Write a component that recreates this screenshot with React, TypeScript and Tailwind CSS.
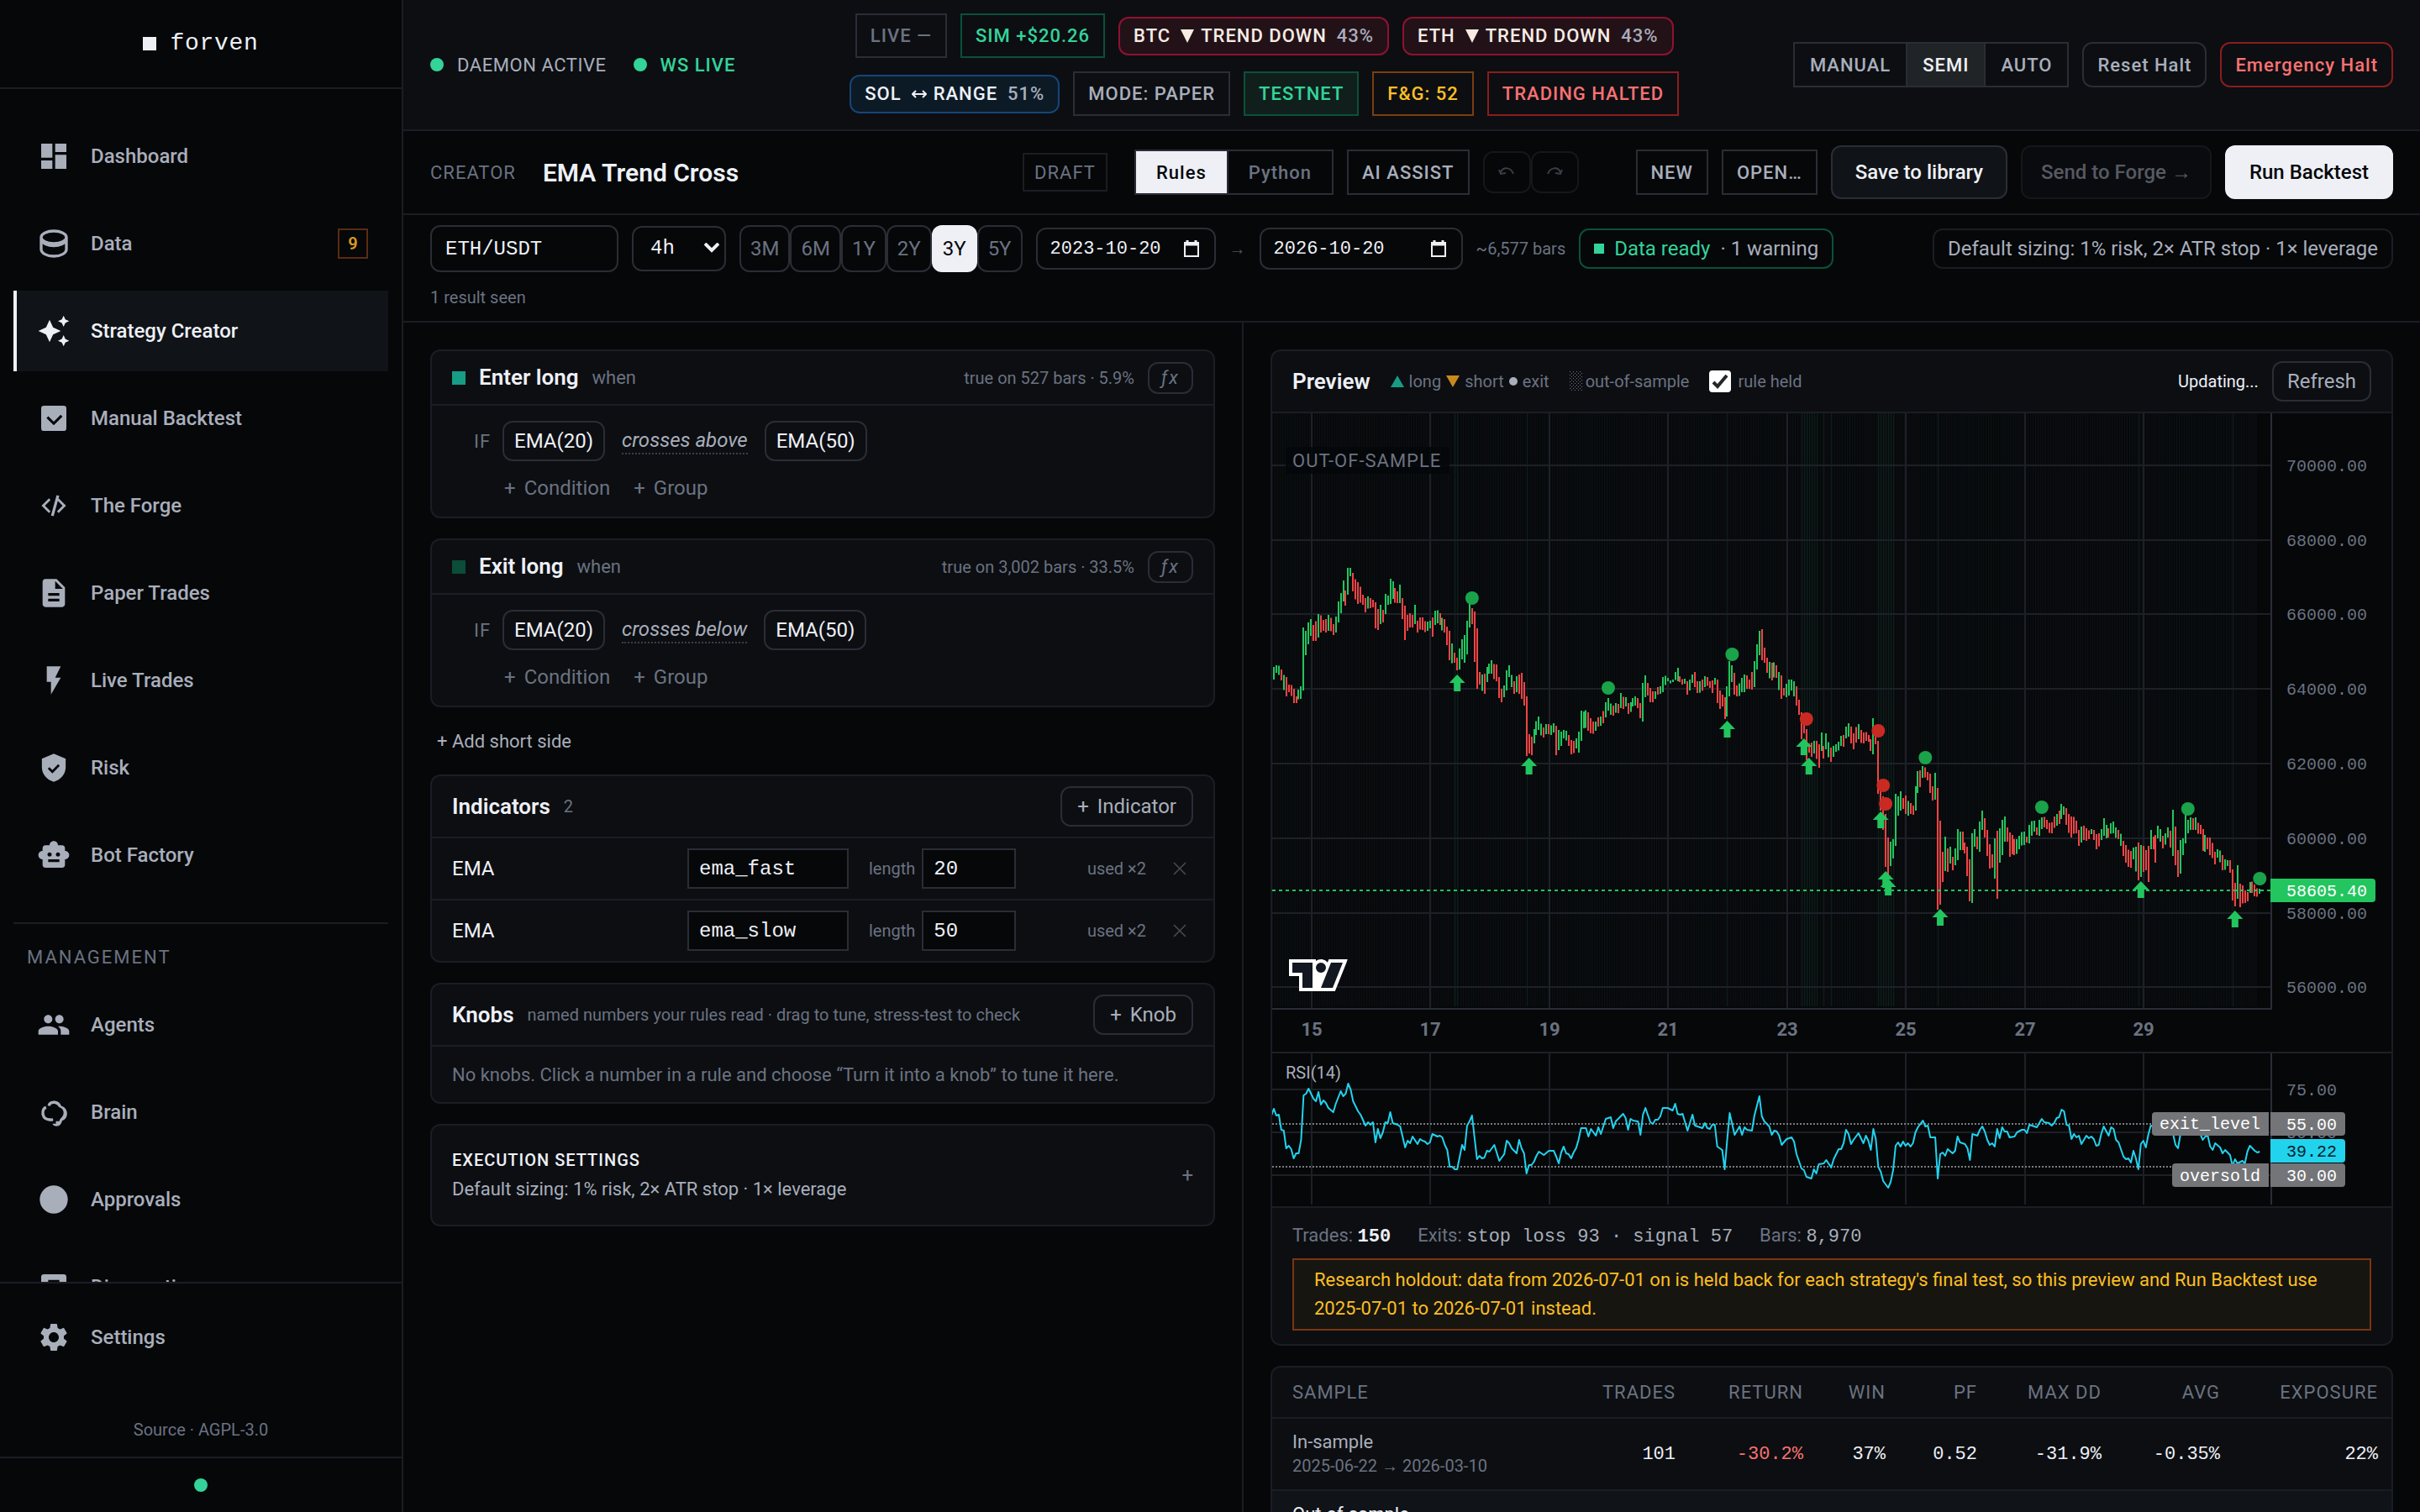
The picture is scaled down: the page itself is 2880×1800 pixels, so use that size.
import type { ReactNode } from 'react';
import { MdAutoAwesome, MdDashboard, MdDescription, MdFlashOn, MdPeople, MdSettings, MdSmartToy } from 'react-icons/md';

type Anchor = [bar: number, high: number, low: number];
type Point = [bar: number, y: number];

const SANS = 'font-["Roboto","Liberation_Sans",sans-serif]';
const MONO = 'font-["Liberation_Mono",monospace]';

// price bars: [bar index, high, low], in chart units from the top of the pane
const BARS: Anchor[] = [
  [0, 302, 317], [1, 300, 309], [3, 305, 318], [5, 314, 337], [6, 323, 332], [8, 328, 345], [9, 337, 345], [11, 325, 340],
  [12, 255, 330], [13, 259, 288], [14, 249, 275], [15, 245, 265], [16, 252, 271], [18, 239, 267], [20, 246, 259], [22, 240, 259],
  [24, 251, 264], [25, 242, 261], [26, 224, 249], [27, 214, 238], [28, 199, 224], [29, 211, 229], [30, 184, 216], [31, 184, 194],
  [32, 190, 212], [34, 201, 227], [36, 216, 228], [37, 220, 237], [39, 220, 232], [40, 222, 231], [41, 225, 256], [42, 233, 258],
  [43, 228, 251], [44, 234, 249], [45, 215, 239], [46, 217, 228], [47, 197, 227], [48, 200, 221], [50, 212, 226], [51, 204, 226],
  [52, 220, 245], [53, 229, 270], [54, 240, 259], [56, 240, 255], [57, 228, 251], [58, 247, 261], [60, 243, 258], [62, 248, 259],
  [63, 247, 256], [64, 243, 266], [65, 235, 252], [67, 238, 252], [69, 245, 261], [70, 254, 276], [71, 259, 294], [73, 285, 297],
  [74, 291, 306], [75, 280, 305], [76, 269, 293], [77, 264, 297], [78, 247, 287], [79, 227, 255], [80, 232, 251], [81, 236, 296],
  [82, 256, 328], [83, 308, 323], [85, 310, 334], [87, 298, 310], [88, 294, 310], [90, 299, 319], [91, 314, 339], [92, 328, 344],
  [93, 324, 338], [94, 306, 330], [95, 300, 314], [97, 319, 334], [99, 311, 334], [100, 309, 340], [101, 320, 348], [102, 337, 408],
  [103, 382, 405], [104, 385, 407], [105, 376, 393], [107, 361, 377], [109, 374, 386], [111, 370, 382], [113, 369, 380], [114, 372, 407],
  [115, 377, 401], [117, 377, 387], [119, 383, 396], [120, 389, 406], [122, 387, 399], [123, 379, 404], [124, 354, 390], [125, 355, 375],
  [127, 356, 378], [128, 363, 381], [130, 367, 378], [132, 361, 372], [134, 344, 362], [135, 339, 354], [137, 348, 360], [139, 346, 357],
  [140, 333, 351], [142, 338, 349], [143, 345, 358], [145, 339, 349], [147, 339, 351], [148, 345, 363], [149, 321, 367], [150, 312, 338],
  [151, 321, 336], [152, 327, 344], [154, 331, 340], [156, 325, 334], [157, 314, 332], [159, 315, 319], [161, 317, 320], [163, 303, 319],
  [164, 313, 320], [166, 316, 322], [167, 319, 335], [169, 311, 321], [170, 308, 326], [171, 319, 333], [174, 313, 326], [176, 319, 327],
  [177, 318, 333], [178, 315, 323], [179, 317, 345], [180, 330, 352], [181, 335, 349], [182, 338, 364], [183, 325, 361], [184, 295, 337],
  [185, 300, 320], [186, 309, 335], [187, 324, 337], [189, 315, 332], [190, 311, 332], [192, 317, 328], [194, 295, 326], [195, 275, 305],
  [196, 259, 288], [197, 257, 294], [198, 279, 297], [199, 291, 309], [201, 297, 318], [203, 300, 315], [205, 312, 340], [206, 327, 336],
  [207, 322, 338], [208, 317, 336], [209, 317, 330], [211, 325, 348], [212, 341, 359], [213, 356, 388], [214, 371, 381], [215, 376, 413],
  [216, 393, 404], [217, 392, 409], [218, 390, 405], [220, 394, 422], [221, 380, 402], [222, 396, 411], [223, 381, 400], [225, 398, 415],
  [226, 396, 409], [227, 394, 403], [229, 384, 396], [230, 383, 397], [231, 373, 387], [232, 369, 385], [233, 373, 393], [234, 381, 400],
  [236, 370, 388], [238, 380, 393], [240, 383, 391], [241, 388, 402], [242, 363, 406], [243, 378, 394], [244, 390, 453], [245, 450, 473],
  [246, 456, 496], [247, 477, 540], [248, 505, 551], [249, 510, 539], [250, 507, 530], [251, 453, 515], [252, 456, 479], [253, 450, 473],
  [254, 458, 471], [255, 455, 477], [257, 464, 477], [258, 467, 478], [259, 444, 473], [260, 426, 452], [262, 420, 434], [264, 427, 437],
  [265, 429, 452], [266, 444, 461], [267, 428, 460], [268, 446, 591], [269, 485, 585], [270, 522, 558], [271, 504, 545], [272, 518, 546],
  [273, 516, 536], [274, 528, 544], [275, 518, 538], [276, 495, 532], [277, 498, 520], [278, 498, 520], [279, 511, 524], [280, 516, 551],
  [281, 531, 581], [282, 500, 583], [283, 495, 516], [284, 504, 519], [285, 486, 522], [286, 473, 496], [287, 482, 505], [288, 496, 527],
  [289, 513, 542], [290, 525, 541], [291, 506, 554], [292, 497, 578], [293, 494, 535], [294, 484, 526], [295, 480, 510], [296, 493, 510],
  [297, 499, 528], [298, 502, 525], [299, 507, 526], [301, 503, 519], [303, 498, 514], [304, 504, 511], [305, 490, 512], [307, 485, 498],
  [308, 493, 502], [309, 484, 503], [310, 481, 495], [312, 484, 495], [314, 487, 500], [316, 477, 491], [318, 465, 483], [319, 468, 478],
  [320, 470, 490], [322, 480, 505], [324, 485, 500], [325, 496, 515], [326, 492, 511], [328, 494, 509], [330, 495, 501], [332, 501, 519],
  [334, 495, 508], [335, 482, 503], [337, 494, 505], [339, 486, 500], [341, 496, 507], [343, 509, 527], [344, 514, 535], [346, 521, 541],
  [347, 517, 531], [349, 511, 556], [350, 514, 552], [352, 520, 544], [353, 515, 558], [354, 496, 519], [355, 504, 519], [356, 502, 535],
  [357, 491, 506], [359, 503, 518], [361, 493, 505], [362, 497, 517], [363, 472, 527], [364, 492, 538], [365, 520, 552], [366, 508, 548],
  [367, 506, 526], [368, 478, 512], [369, 484, 500], [371, 482, 496], [372, 481, 496], [374, 490, 501], [375, 495, 521], [377, 505, 519],
  [378, 505, 526], [380, 522, 537], [381, 519, 529], [383, 526, 544], [385, 532, 539], [386, 532, 547], [387, 543, 580], [388, 559, 587],
  [389, 538, 578], [390, 560, 588], [392, 568, 583], [393, 570, 581], [394, 558, 571], [396, 561, 575], [398, 566, 572],
];

const RSI: Point[] = [
  [-1, 74], [0, 66], [1, 74], [2, 73], [3, 91], [4, 92], [5, 113], [6, 110], [7, 114], [8, 125], [9, 119], [10, 119], [11, 103],
  [12, 50], [13, 48], [14, 42], [15, 48], [16, 54], [17, 57], [18, 46], [19, 61], [20, 56], [21, 59], [22, 65], [24, 70], [25, 60],
  [27, 45], [28, 51], [29, 48], [30, 36], [31, 43], [32, 57], [34, 69], [35, 73], [37, 86], [38, 82], [39, 85], [40, 82], [41, 106],
  [42, 90], [43, 101], [44, 94], [45, 82], [46, 83], [47, 70], [48, 83], [50, 85], [51, 87], [53, 112], [54, 104], [55, 107], [56, 99],
  [58, 108], [59, 102], [60, 104], [61, 105], [62, 108], [63, 106], [64, 96], [66, 99], [67, 98], [68, 100], [69, 109], [70, 115],
  [71, 135], [72, 135], [73, 138], [74, 138], [76, 109], [77, 115], [78, 86], [79, 81], [80, 74], [82, 126], [83, 122], [84, 125],
  [85, 124], [86, 116], [87, 117], [89, 109], [91, 128], [93, 120], [94, 104], [95, 107], [96, 113], [98, 119], [99, 103], [100, 113],
  [101, 119], [102, 143], [103, 133], [104, 133], [105, 129], [106, 122], [107, 117], [109, 121], [111, 116], [113, 116], [114, 123],
  [115, 131], [116, 118], [117, 111], [118, 119], [119, 120], [120, 125], [121, 118], [122, 113], [123, 103], [124, 89], [126, 89],
  [127, 99], [128, 90], [130, 98], [131, 88], [132, 96], [134, 78], [136, 76], [137, 89], [138, 81], [141, 72], [142, 77], [143, 91],
  [144, 78], [145, 80], [147, 81], [148, 97], [149, 73], [150, 65], [152, 82], [153, 84], [154, 79], [155, 79], [156, 75], [157, 65],
  [159, 65], [161, 68], [162, 60], [163, 72], [164, 73], [165, 72], [167, 92], [169, 73], [170, 86], [173, 89], [174, 83], [175, 89],
  [176, 90], [177, 85], [178, 85], [179, 111], [181, 115], [182, 138], [183, 103], [184, 71], [186, 97], [188, 87], [189, 97],
  [190, 88], [191, 91], [193, 92], [194, 74], [196, 51], [197, 75], [198, 81], [200, 87], [201, 97], [202, 92], [203, 93], [204, 98],
  [205, 109], [207, 102], [209, 100], [210, 105], [211, 120], [213, 137], [214, 139], [215, 147], [217, 149], [218, 138], [219, 143],
  [220, 132], [222, 131], [223, 127], [225, 136], [226, 126], [228, 114], [229, 114], [230, 107], [231, 91], [232, 96], [233, 108],
  [234, 103], [236, 95], [238, 107], [239, 98], [240, 104], [241, 115], [242, 90], [243, 102], [244, 135], [245, 141], [246, 152],
  [248, 160], [249, 153], [250, 139], [251, 110], [252, 106], [253, 111], [254, 105], [255, 110], [256, 107], [257, 111], [258, 107],
  [259, 94], [260, 88], [262, 80], [263, 87], [264, 86], [265, 100], [267, 100], [268, 149], [269, 120], [270, 118], [271, 122],
  [272, 114], [274, 119], [275, 116], [276, 99], [277, 106], [279, 108], [280, 113], [281, 127], [282, 96], [284, 98], [285, 91],
  [286, 87], [287, 93], [288, 103], [289, 109], [290, 107], [291, 111], [292, 90], [293, 101], [294, 88], [295, 93], [296, 93],
  [297, 100], [299, 99], [300, 94], [302, 91], [303, 91], [304, 95], [305, 85], [308, 88], [310, 78], [311, 82], [313, 83], [314, 86],
  [315, 83], [316, 77], [317, 76], [318, 67], [319, 69], [320, 85], [321, 86], [322, 102], [323, 96], [324, 100], [325, 98], [326, 108],
  [328, 98], [329, 101], [330, 99], [331, 102], [332, 110], [333, 109], [334, 96], [335, 87], [337, 98], [338, 88], [339, 90],
  [340, 103], [341, 106], [343, 123], [344, 126], [345, 125], [346, 130], [347, 116], [348, 125], [349, 138], [350, 108], [351, 104],
  [352, 112], [353, 97], [354, 86], [358, 90], [361, 88], [363, 96], [364, 109], [365, 113], [366, 96], [368, 82], [371, 84], [374, 96],
  [375, 103], [376, 99], [377, 98], [378, 111], [379, 115], [380, 107], [382, 112], [383, 119], [384, 115], [386, 121], [387, 134],
  [388, 126], [389, 131], [391, 128], [392, 131], [393, 117], [394, 110], [396, 116], [397, 118], [398, 117],
];

const ENTRIES: Point[] = [
  [74, 311], [103, 410], [183, 366], [214, 387], [216, 410], [245, 474], [247, 545], [248, 554], [269, 590], [350, 557], [388, 592],
];
const WINS: Point[] = [[80, 220], [135, 327], [185, 287], [263, 410], [310, 469], [369, 471], [398, 554]];
const LOSSES: Point[] = [[215, 364], [244, 378], [246, 443], [247, 465]];
const HELD = [73, 74, 102, 183, 213, 214, 215, 216, 217, 218, 219, 222, 225, 244, 245, 246, 247, 248, 249, 250, 268, 349, 387];

const barX = (bar: number) => 2 + bar * 2.948;

// fills the bars between two anchors and gives each one its direction
function expandBars(anchors: Anchor[]) {
  const bars: { bar: number; high: number; low: number; up: boolean }[] = [];
  anchors.forEach(([bar, high, low], n) => {
    const prev = anchors[n - 1];
    if (prev) {
      for (let b = prev[0] + 1; b < bar; b++) {
        const t = (b - prev[0]) / (bar - prev[0]);
        const shift = b % 4 < 2 ? 2 : -2;
        bars.push({ bar: b, high: prev[1] + (high - prev[1]) * t + shift, low: prev[2] + (low - prev[2]) * t + shift, up: b % 2 === 0 });
      }
    }
    const last = bars[bars.length - 1];
    bars.push({ bar, high, low, up: last ? high + low < last.high + last.low : true });
  });
  return bars;
}

function PreviewChart() {
  const prices = [
    ['70000.00', 62], ['68000.00', 151], ['66000.00', 239], ['64000.00', 328],
    ['62000.00', 417], ['60000.00', 506], ['58000.00', 595], ['56000.00', 683],
  ] as const;
  const days = [['15', 47], ['17', 188], ['19', 330], ['21', 471], ['23', 613], ['25', 754], ['27', 896], ['29', 1037]] as const;
  return (
    <svg viewBox="0 0 1332 944" className={`block w-full bg-[#050709] ${MONO}`} role="img" aria-label="Price preview">
      <defs>
        <pattern id="bar-stripes" width="2.948" height="8" patternUnits="userSpaceOnUse">
          <rect width="1.2" height="8" fill="#0d1013" />
        </pattern>
      </defs>
      <rect width="1172" height="706" fill="url(#bar-stripes)" />
      {HELD.map((b) => <rect key={b} x={Math.round(barX(b))} width="1" height="706" fill="#0c2019" />)}

      {/* grid */}
      <g fill="#1e2027">
        {prices.map(([label, y]) => <rect key={label} y={y - 1} width="1188" height="2" />)}
        {days.map(([label, x]) => <rect key={label} x={x - 1} width="2" height="708" />)}
        {days.map(([label, x]) => <rect key={label} x={x - 1} y="762" width="2" height="180" />)}
        {[805, 856, 907].map((y) => <rect key={y} y={y - 1} width="1188" height="2" />)}
        <rect y="760" width="1332" height="2" />
      </g>
      <g fill="#2a2d35">
        <rect y="708" width="1190" height="2" />
        <rect x="1188" width="2" height="710" />
        <rect x="1188" y="762" width="2" height="180" />
      </g>

      {expandBars(BARS).map((b) => (
        <rect key={b.bar} x={Math.round(barX(b.bar)) - 1} y={b.high} width="2" height={b.low - b.high} fill={b.up ? '#22c55e' : '#ef4444'} />
      ))}
      <line x1="0" x2="1188" y1="568" y2="568" stroke="#22c55e" strokeWidth="2" strokeDasharray="4 4" />
      {ENTRIES.map(([b, y]) => (
        <path key={b} d={`M${barX(b)} ${y}l9.5 10h-5.500v10h-8v-10h-5.500z`} fill="#22c55e" />
      ))}
      {WINS.map(([b, y]) => <circle key={b} cx={barX(b)} cy={y} r="8" fill="#1aa34a" />)}
      {LOSSES.map(([b, y]) => <circle key={b} cx={barX(b)} cy={y} r="8" fill="#c92a22" />)}

      <g fill="#6b7280" fontSize="20">
        {prices.map(([label, y]) => <text key={label} x="1207" y={y + 7}>{label}</text>)}
        <text x="1207" y="812">75.00</text>
        <text x="1207" y="863">50.00</text>
      </g>
      <g fill="#6b7280" fontSize="22" fontWeight="700" textAnchor="middle" className={SANS}>
        {days.map(([label, x]) => <text key={label} x={x} y="741">{label}</text>)}
      </g>

      {/* oscillator pane */}
      <g stroke="#787b80" strokeWidth="2" strokeDasharray="2 2">
        <line x1="0" x2="1188" y1="846" y2="846" />
        <line x1="0" x2="1188" y1="897" y2="897" />
      </g>
      <polyline points={RSI.map(([b, y]) => `${barX(b)},${y + 762}`).join(' ')} fill="none" stroke="#22d3ee" strokeWidth="2" strokeLinejoin="round" />
      <text x="16" y="792" fontSize="20" fill="#a9aebb" className={SANS}>RSI(14)</text>
      <g fill="#747578">
        <path d="M1051 832h135v28h-135a4 4 0 0 1-4-4v-20a4 4 0 0 1 4-4z" />
        <path d="M1188 832h85a4 4 0 0 1 4 4v20a4 4 0 0 1-4 4h-85z" />
        <path d="M1075 893h111v28h-111a4 4 0 0 1-4-4v-20a4 4 0 0 1 4-4z" />
        <path d="M1188 893h85a4 4 0 0 1 4 4v20a4 4 0 0 1-4 4h-85z" />
      </g>
      <path d="M1188 864h85a4 4 0 0 1 4 4v20a4 4 0 0 1-4 4h-85z" fill="#22d3ee" />
      <path d="M1188 554h121a4 4 0 0 1 4 4v20a4 4 0 0 1-4 4h-121z" fill="#22c55e" />
      <g fill="#ffffff" fontSize="20">
        <text x="1207" y="575">58605.40</text>
        <text x="1056" y="852">exit_level</text>
        <text x="1207" y="853">55.00</text>
        <text x="1080" y="914">oversold</text>
        <text x="1207" y="914">30.00</text>
        <text x="1207" y="885" fill="#06222a">39.22</text>
      </g>

      <rect x="16" y="40" width="195" height="32" fill="#050709" fillOpacity="0.85" />
      <text x="24" y="64" fontSize="22" letterSpacing="1" fill="#6b7280" className={SANS}>OUT-OF-SAMPLE</text>

      {/* chart library mark */}
      <g transform="translate(20 650) scale(2)" fillRule="evenodd">
        <path fill="#ffffff" d="M2 0H0v10h6v9h21.400l.5-1.300 6-15 1-2.700H23.700l-.5 1.300-.2.6a5 5 0 0 0-7-.9V0H2Z" />
        <path fill="#131722" d="M14 2H2v6h6v9h6V2Zm12 15h-7l6-15h7l-6 15Zm-7-9a3 3 0 1 0 0-6 3 3 0 0 0 0 6Z" />
      </g>
    </svg>
  );
}

function Glyph({ children }: { children: ReactNode }) {
  return <svg viewBox="0 0 24 24" className="size-10" fill="currentColor" aria-hidden="true">{children}</svg>;
}

const mainNav = [
  { label: 'Dashboard', icon: <MdDashboard className="size-10" /> },
  {
    label: 'Data',
    badge: '9',
    icon: (
      <Glyph>
        <path fill="none" stroke="currentColor" strokeWidth="2" d="M3 7.500C3 5 7 3 12 3s9 2 9 4.500S17 12 12 12s-9-2-9-4.500zM3 7.500v8.500c0 2.800 4 5 9 5s9-2.200 9-5V7.500" />
        <path fill="none" stroke="currentColor" strokeWidth="3" d="M3.500 9.500c1.500 2.300 4.500 3.500 8.500 3.500s7-1.200 8.500-3.500" />
      </Glyph>
    ),
  },
  { label: 'Strategy Creator', active: true, icon: <MdAutoAwesome className="size-10" /> },
  {
    label: 'Manual Backtest',
    icon: <Glyph><path fillRule="evenodd" d="M19 3H5a2 2 0 0 0-2 2v14a2 2 0 0 0 2 2h14a2 2 0 0 0 2-2V5a2 2 0 0 0-2-2zM12 17l-5.200-5.200 1.300-1.300 3.900 3.900 4.900-4.900 1.300 1.300z" /></Glyph>,
  },
  {
    label: 'The Forge',
    icon: <Glyph><path d="M9.400 16.600 4.800 12l4.600-4.600L8 6l-6 6 6 6zM14.600 16.600l4.600-4.600-4.600-4.600L16 6l6 6-6 6z" transform="translate(1.500 1.500) scale(.875)" /><path d="m14 4.500 1.900.500-4 14.500-1.900-.500z" /></Glyph>,
  },
  { label: 'Paper Trades', icon: <MdDescription className="size-10" /> },
  { label: 'Live Trades', icon: <MdFlashOn className="size-10" /> },
  {
    label: 'Risk',
    icon: <Glyph><path fillRule="evenodd" d="m12 2-8.500 3.500v6c0 5 3.500 9 8.500 10.500 5-1.500 8.500-5.500 8.500-10.500v-6zM11 16l-3.300-3.200 1.200-1.200 2.100 2 4.100-4.100 1.200 1.200z" /></Glyph>,
  },
  { label: 'Bot Factory', icon: <MdSmartToy className="size-10" /> },
];

const managementNav = [
  { label: 'Agents', icon: <MdPeople className="size-10" /> },
  {
    label: 'Brain',
    icon: (
      <Glyph>
        <path fill="none" stroke="currentColor" strokeWidth="2" d="M6.500 8.500C4 9.500 3.500 13 5 15.500c1 1.700 3 2 6.500 2M8.500 7.500c.5-3 6-4 8 .5" />
        <path d="M12 4c3 0 4.500 1.500 5 3.500 3 .7 4.500 3 4.500 5.500s-1.500 4.500-3.500 5c-.5 2.500-2 4-4 4-1.500 0-2.500-.7-3-1.800h2.500V18.500h2.500c0-2 3-3 3-6 0-2-1-3.500-3-4V6.500h-2.500z" />
      </Glyph>
    ),
  },
  { label: 'Approvals', icon: <Glyph><circle cx="12" cy="12" r="10" /></Glyph> },
  { label: 'Diagnostics', icon: <Glyph><path fillRule="evenodd" d="M5 3h14a2 2 0 0 1 2 2v14a2 2 0 0 1-2 2H5a2 2 0 0 1-2-2V5a2 2 0 0 1 2-2zm3 4v2h8V7z" /></Glyph> },
];

function NavItem({ label, icon, badge, active }: { label: string; icon: ReactNode; badge?: string; active?: boolean }) {
  return (
    <a
      href="#"
      className={`flex h-24 shrink-0 items-center gap-6 border-l-4 px-6 text-2xl font-medium ${
        active ? 'border-[#eef0f6] bg-[#101318] text-[#eef0f6]' : 'border-transparent text-[#a9aebb]'
      }`}
    >
      {icon}
      <span className="flex-1">{label}</span>
      {badge && <span className="flex h-9 w-9 items-center justify-center border-2 border-[#5a2b12] text-xl font-semibold text-[#d99a20]">{badge}</span>}
    </a>
  );
}

function Sidebar() {
  return (
    <aside className="flex w-[480px] shrink-0 flex-col border-r-2 border-[#1b1d24]">
      <div className={`flex h-[106px] shrink-0 items-center justify-center gap-4 border-b-2 border-[#1b1d24] text-[28px] tracking-wide ${MONO}`}>
        <span className="size-4 bg-[#eef0f6]" />
        forven
      </div>
      <nav className="flex min-h-0 flex-1 flex-col gap-2 overflow-hidden px-4 pt-8">
        {mainNav.map((item) => <NavItem key={item.label} {...item} />)}
        <div className="mt-6 flex h-[66px] shrink-0 items-end border-t-2 border-[#1b1d24] px-4 pb-2 text-[22px] tracking-[2px] text-[#6b7280]">
          MANAGEMENT
        </div>
        {managementNav.map((item) => <NavItem key={item.label} {...item} />)}
      </nav>
      <div className="flex h-[208px] shrink-0 flex-col border-t-2 border-[#1b1d24] px-4 pt-4">
        <NavItem label="Settings" icon={<MdSettings className="size-10" />} />
        <a href="#" className="mt-12 text-center text-xl text-[#6b7280]">Source · AGPL-3.0</a>
      </div>
      <div className="flex h-[66px] shrink-0 items-center justify-center border-t-2 border-[#1b1d24]">
        <span className="size-4 rounded-full bg-[#34d399]" />
      </div>
    </aside>
  );
}

function Regime({ coin, mark, trend, pct, tone }: { coin: string; mark: ReactNode; trend: string; pct: string; tone: string }) {
  return (
    <span className={`flex h-[46px] items-center rounded-xl border-2 px-4 font-medium ${tone}`}>
      <span>{coin}</span>
      <span className="mr-2 ml-3 flex">{mark}</span>
      <span>{trend}</span>
      <span className="ml-3 text-[#a9aebb]">{pct}</span>
    </span>
  );
}

const downMark = <svg viewBox="0 0 16 16" className="size-4" fill="currentColor" aria-hidden="true"><path d="M0 0h16L8 16z" /></svg>;
const rangeMark = (
  <svg viewBox="0 0 18 12" className="h-3 w-[18px]" fill="none" stroke="currentColor" strokeWidth="2" aria-hidden="true">
    <path d="M1 6h16M5 2 1 6l4 4M13 2l4 4-4 4" />
  </svg>
);

function StatusBar() {
  const tag = 'flex h-[53px] items-center border-2 px-4 font-medium';
  return (
    <header className="flex shrink-0 items-center justify-between border-b-2 border-[#1b1d24] bg-[#0c0e12] px-8 py-4 text-[22px] tracking-[1px]">
      <div className="flex items-center gap-4">
        <span className="size-4 rounded-full bg-[#34d399]" />
        <span className="tracking-wide text-[#a9aebb]">DAEMON ACTIVE</span>
        <span className="ml-4 size-4 rounded-full bg-[#34d399]" />
        <span className="font-medium text-[#34d399]">WS LIVE</span>
      </div>
      <div className="flex flex-col items-center gap-4">
        <div className="flex items-center gap-4">
          <span className={`${tag} border-[#2a2d35] text-[#6b7280]`}>LIVE —</span>
          <span className={`${tag} border-[#0b5138] text-[#34d399]`}>SIM +$20.26</span>
          <Regime coin="BTC" mark={downMark} trend="TREND DOWN" pct="43%" tone="border-[#8f1230] bg-[#231118] text-[#f7ece4]" />
          <Regime coin="ETH" mark={downMark} trend="TREND DOWN" pct="43%" tone="border-[#8f1230] bg-[#231118] text-[#f7ece4]" />
        </div>
        <div className="flex items-center gap-4">
          <Regime coin="SOL" mark={rangeMark} trend="RANGE" pct="51%" tone="border-[#164577] bg-[#0c1a26] text-[#eef0f6]" />
          <span className={`${tag} border-[#2a2d35] text-[#a9aebb]`}>MODE: PAPER</span>
          <span className={`${tag} border-[#0b5138] bg-[#101f1c] text-[#34d399]`}>TESTNET</span>
          <span className={`${tag} border-[#7a3e10] text-[#fbbf24]`}>F&amp;G: 52</span>
          <span className={`${tag} border-[#8b1d1d] text-[#f87171]`}>TRADING HALTED</span>
        </div>
      </div>
      <div className="flex items-center gap-4">
        <div className="flex h-[54px] border-2 border-[#2a2d35] font-medium text-[#a9aebb]">
          <button className="px-[18px]">MANUAL</button>
          <button className="border-x-2 border-[#2a2d35] bg-[#202427] px-[18px] text-[#eef0f6]">SEMI</button>
          <button className="px-[18px]">AUTO</button>
        </div>
        <button className="h-[54px] rounded-xl border-2 border-[#2a2d35] px-4 font-medium text-[#a9aebb]">Reset Halt</button>
        <button className="h-[54px] rounded-xl border-2 border-[#8b1d1d] px-4 font-medium text-[#f87171]">Emergency Halt</button>
      </div>
    </header>
  );
}

function CreatorBar() {
  const square = 'h-[54px] border-2 border-[#2a2d35] px-4 text-[22px] font-medium tracking-[1px] text-[#a9aebb]';
  const big = 'h-16 rounded-xl border-2 text-2xl font-medium';
  const step = 'flex h-[50px] w-[57px] items-center justify-center rounded-xl border-2 border-[#15171b] text-[#3a3f48]';
  return (
    <div className="flex h-[100px] shrink-0 items-center border-b-2 border-[#1b1d24] px-8">
      <div className="mr-auto flex items-center gap-8">
        <span className="text-[22px] tracking-[1px] text-[#6b7280]">CREATOR</span>
        <h1 className="text-[30px] font-semibold">EMA Trend Cross</h1>
      </div>
      <div className="mr-17 flex items-center gap-4">
        <span className="mr-4 flex h-[46px] items-center border-2 border-[#1b1d24] px-3 text-[22px] tracking-[1px] text-[#6b7280]">DRAFT</span>
        <div className="flex h-[54px] border-2 border-[#2a2d35] text-[22px] font-medium tracking-[1px]">
          <button className="border-r-2 border-[#2a2d35] bg-[#eef0f6] px-6 text-[#050709]">Rules</button>
          <button className="px-6 text-[#6b7280]">Python</button>
        </div>
        <button className={square}>AI ASSIST</button>
        <div className="flex">
          <button className={step} aria-label="Undo">
            <svg viewBox="0 0 20 14" className="h-[14px] w-5" fill="none" stroke="currentColor" strokeWidth="2"><path d="M3 7c3-7 12-6 15 2M1 4l2 5 6-1" /></svg>
          </button>
          <button className={step} aria-label="Redo">
            <svg viewBox="0 0 20 14" className="h-[14px] w-5" fill="none" stroke="currentColor" strokeWidth="2"><path d="M17 7C14 0 5 1 2 9m17-5-2 5-6-1" /></svg>
          </button>
        </div>
      </div>
      <div className="flex items-center gap-4">
        <button className={square}>NEW</button>
        <button className={square}>OPEN…</button>
        <button className={`${big} border-[#2a2d35] bg-[#101318] px-[27px] text-[#eef0f6]`}>Save to library</button>
        <button className={`${big} border-[#15171b] bg-[#0a0b0f] px-[22px] text-[#565a62]`}>Send to Forge →</button>
        <button className={`${big} border-[#eef0f6] bg-[#eef0f6] px-[27px] text-[#050709]`}>Run Backtest</button>
      </div>
    </div>
  );
}

function DateBox({ label, value, className }: { label: string; value: string; className: string }) {
  return (
    <label className={`flex h-[50px] items-center justify-between rounded-xl border-2 border-[#2a2d35] pr-[18px] pl-[15px] ${className}`}>
      <input aria-label={label} defaultValue={value} className={`w-36 bg-transparent text-[22px] font-medium outline-none ${MONO}`} />
      <svg viewBox="0 0 18 20" className="h-5 w-[18px]" fill="none" stroke="currentColor" strokeWidth="2" aria-hidden="true">
        <path d="M1 3h16v16H1z" /><path d="M1 5h16M4 0v4M14 0v4" strokeWidth="3" />
      </svg>
    </label>
  );
}

function MarketBar() {
  return (
    <div className="flex h-32 shrink-0 flex-col border-b-2 border-[#1b1d24] px-8 pt-3">
      <div className="flex items-center gap-4">
        <input aria-label="Symbol" defaultValue="ETH/USDT" className={`h-14 w-56 rounded-xl border-2 border-[#2a2d35] bg-transparent px-4 text-2xl outline-none ${MONO}`} />
        <div className="relative">
          <select aria-label="Timeframe" defaultValue="4h" className={`h-[54px] w-28 appearance-none rounded-xl border-2 border-[#2a2d35] bg-transparent pl-5 text-2xl outline-none ${MONO}`}>
            <option>1h</option>
            <option>4h</option>
            <option>1d</option>
          </select>
          <svg viewBox="0 0 18 12" className="pointer-events-none absolute top-5 right-2 h-3 w-[18px]" fill="none" stroke="currentColor" strokeWidth="4" aria-hidden="true"><path d="m1 1 8 8 8-8" /></svg>
        </div>
        <div className="flex text-2xl text-[#6b7280]">
          {['3M', '6M', '1Y', '2Y', '3Y', '5Y'].map((span) => (
            <button key={span} className={`h-14 rounded-xl border-2 px-[11px] ${span === '3Y' ? 'border-[#eef0f6] bg-[#eef0f6] text-[#050709]' : 'border-[#2a2d35]'}`}>{span}</button>
          ))}
        </div>
        <DateBox label="From" value="2023-10-20" className="w-[214px]" />
        <span className="text-xl text-[#4b5563]">→</span>
        <DateBox label="To" value="2026-10-20" className="w-[242px]" />
        <span className="text-xl text-[#6b7280]">~6,577 bars</span>
        <span className="flex h-12 items-center rounded-xl border-2 border-[#0b5138] px-4 text-2xl text-[#34d399]">
          <span className="mr-3 size-3 bg-[#34d399]" />
          Data ready
          <span className="ml-3 text-[#a9aebb]">· 1 warning</span>
        </span>
        <span className="ml-auto flex h-12 items-center rounded-xl border-2 border-[#1b1d24] px-4 text-2xl text-[#a9aebb]">Default sizing: 1% risk, 2× ATR stop · 1× leverage</span>
      </div>
      <p className="mt-4 text-xl text-[#6b7280]">1 result seen</p>
    </div>
  );
}

const card = 'rounded-xl border-2 border-[#1b1d24] bg-[#0c0e12]';
const smallButton = 'flex h-12 items-center gap-2.5 rounded-xl border-2 border-[#2a2d35] text-2xl text-[#a9aebb]';

function RuleCard({ title, square, held, operator }: { title: string; square: string; held: string; operator: string }) {
  const chip = 'flex h-12 items-center rounded-xl border-2 border-[#2a2d35] px-3 text-2xl';
  return (
    <section className={card}>
      <div className="flex h-[65px] items-center gap-4 border-b-2 border-[#1b1d24] px-6">
        <span className={`size-4 ${square}`} />
        <h2 className="text-[26px] font-semibold">{title}</h2>
        <span className="text-[22px] text-[#6b7280]">when</span>
        <span className="ml-auto text-xl text-[#6b7280]">{held}</span>
        <button className="flex h-[38px] w-[54px] items-center justify-center rounded-xl border-2 border-[#2a2d35] text-[22px] tracking-[2px] text-[#6b7280] italic">ƒx</button>
      </div>
      <div className="h-[132px] pt-[18px] pl-[50px]">
        <div className="flex items-center">
          <span className="w-[34px] text-[22px] tracking-[1px] text-[#6b7280]">IF</span>
          <button className={chip}>EMA(20)</button>
          <button className="mx-5 h-8 border-b-2 border-dotted border-[#3a3f48] text-2xl leading-7 text-[#a9aebb] italic">{operator}</button>
          <button className={chip}>EMA(50)</button>
        </div>
        <div className="mt-4 flex gap-7 pl-9 text-2xl text-[#6b7280]">
          <button className="flex gap-2.5"><span>+</span> Condition</button>
          <button className="flex gap-2.5"><span>+</span> Group</button>
        </div>
      </div>
    </section>
  );
}

function IndicatorRow({ name, length }: { name: string; length: string }) {
  const box = `h-12 border-2 border-[#2a2d35] bg-[#050709] px-3 text-2xl outline-none ${MONO}`;
  return (
    <div className="flex h-[74px] items-center border-t-2 border-[#1b1d24] px-6 text-2xl">
      <span className="w-[280px]">EMA</span>
      <input aria-label="Indicator name" defaultValue={name} className={`w-48 ${box}`} />
      <label className="ml-6 flex items-center gap-2 text-xl text-[#6b7280]">
        length
        <input defaultValue={length} className={`w-28 text-[#eef0f6] ${box}`} />
      </label>
      <span className="ml-auto text-xl text-[#6b7280]">used ×2</span>
      <button aria-label="Remove" className="mr-2 ml-8 text-[#4f4a4c]">
        <svg viewBox="0 0 16 16" className="size-4" stroke="currentColor" strokeWidth="1.500"><path d="m1 1 14 14M15 1 1 15" /></svg>
      </button>
    </div>
  );
}

function RulesColumn() {
  return (
    <div className="flex min-w-0 flex-col gap-6 overflow-hidden border-r-2 border-[#1b1d24] p-8">
      <RuleCard title="Enter long" square="bg-[#179c86]" held="true on 527 bars · 5.9%" operator="crosses above" />
      <RuleCard title="Exit long" square="bg-[#0b4d38]" held="true on 3,002 bars · 33.5%" operator="crosses below" />
      <button className="h-8 self-start px-2 text-[22px] text-[#a9aebb]">+ Add short side</button>
      <section className={card}>
        <div className="flex h-[72px] items-center gap-4 px-6">
          <h2 className="text-[26px] font-semibold">Indicators</h2>
          <span className="text-xl text-[#6b7280]">2</span>
          <button className={`${smallButton} ml-auto px-[18px]`}><span>+</span> Indicator</button>
        </div>
        <IndicatorRow name="ema_fast" length="20" />
        <IndicatorRow name="ema_slow" length="50" />
      </section>
      <section className={card}>
        <div className="flex h-[74px] items-center gap-4 border-b-2 border-[#1b1d24] px-6">
          <h2 className="text-[26px] font-semibold">Knobs</h2>
          <span className="text-xl text-[#6b7280]">named numbers your rules read · drag to tune, stress-test to check</span>
          <button className={`${smallButton} ml-auto px-[18px]`}><span>+</span> Knob</button>
        </div>
        <p className="flex h-[66px] items-center px-6 text-[22px] text-[#6b7280]">No knobs. Click a number in a rule and choose “Turn it into a knob” to tune it here.</p>
      </section>
      <section className={`${card} flex h-[122px] items-center justify-between px-6`}>
        <div>
          <h2 className="text-xl font-medium tracking-[1px]">EXECUTION SETTINGS</h2>
          <p className="mt-1 text-[22px] text-[#a9aebb]">Default sizing: 1% risk, 2× ATR stop · 1× leverage</p>
        </div>
        <button className="text-2xl text-[#6b7280]">+</button>
      </section>
    </div>
  );
}

const columns = [
  { label: 'TRADES', width: 'w-[156px]' },
  { label: 'RETURN', width: 'w-[152px]' },
  { label: 'WIN', width: 'w-[98px]' },
  { label: 'PF', width: 'w-[109px]' },
  { label: 'MAX DD', width: 'w-[148px]' },
  { label: 'AVG', width: 'w-[141px]' },
  { label: 'EXPOSURE', width: 'w-[188px]' },
];

const samples = [
  { name: 'In-sample', range: '2025-06-22 → 2026-03-10', cells: ['101', '-30.2%', '37%', '0.52', '-31.9%', '-0.35%', '22%'] },
  { name: 'Out-of-sample', range: '2026-03-10 → 2026-07-01', cells: ['49', '-12.4%', '41%', '0.68', '-14.0%', '-0.26%', '23%'] },
];

function PreviewColumn() {
  return (
    <div className="flex min-w-0 flex-col gap-6 overflow-hidden p-8">
      <section className={`${card} shrink-0 overflow-hidden`}>
        <div className="flex h-[74px] items-center border-b-2 border-[#1b1d24] px-6 text-xl text-[#6b7280]">
          <h2 className="mr-6 text-[26px] font-semibold text-[#eef0f6]">Preview</h2>
          <svg viewBox="0 0 16 14" className="mr-1.5 h-3.5 w-4" aria-hidden="true"><path d="M8 0l8 14H0z" fill="#179c86" /></svg>
          long
          <svg viewBox="0 0 16 14" className="mx-1.5 h-3.5 w-4" aria-hidden="true"><path d="M0 0h16L8 14z" fill="#c98a1b" /></svg>
          short
          <span className="mx-1.5 size-2.5 rounded-full bg-[#a9aebb]" />
          exit
          <svg viewBox="0 0 15 24" className="mr-1 ml-6 h-6 w-[15px]" aria-hidden="true">
            <defs><pattern id="shade" width="4" height="4" patternUnits="userSpaceOnUse"><path d="M0 0h1v1H0zM2 2h1v1H2z" fill="#6b7280" /></pattern></defs>
            <rect width="15" height="24" fill="url(#shade)" />
          </svg>
          out-of-sample
          <label className="ml-6 flex items-center gap-2">
            <span className="relative flex">
              <input type="checkbox" defaultChecked className="size-[26px] appearance-none rounded bg-white" />
              <svg viewBox="0 0 26 26" className="pointer-events-none absolute inset-0 size-[26px]" fill="none" stroke="#23262d" strokeWidth="4" aria-hidden="true"><path d="m5 14 5 5L21 6" /></svg>
            </span>
            rule held
          </label>
          <span className="ml-auto text-xl text-[#eef0f6]">Updating...</span>
          <button className={`${smallButton} ml-4 px-4`}>Refresh</button>
        </div>
        <PreviewChart />
        <div className="border-t-2 border-[#1b1d24] px-6 pb-4 text-[22px]">
          <p className="flex h-[60px] items-center gap-8 pt-1.5 text-[#6b7280]">
            <span>Trades: <b className={`text-[#eef0f6] ${MONO}`}>150</b></span>
            <span>Exits: <span className={`text-[#a9aebb] ${MONO}`}>stop loss 93 · signal 57</span></span>
            <span>Bars: <span className={`text-[#a9aebb] ${MONO}`}>8,970</span></span>
          </p>
          <p className="border-2 border-[#7a3510] bg-[#171510] px-6 py-[7px] leading-[34px] text-[#fbbf24]">
            Research holdout: data from 2026-07-01 on is held back for each strategy's final test, so this preview and Run Backtest use 2025-07-01 to 2026-07-01 instead.
          </p>
        </div>
      </section>
      <section className={`${card} shrink-0 overflow-hidden`}>
        <table className="w-full table-fixed text-right text-[22px]">
          <thead>
            <tr className="h-[60px] border-b-2 border-[#1b1d24] tracking-[1px] text-[#6b7280]">
              <th className="pl-6 text-left font-normal">SAMPLE</th>
              {columns.map((c) => <th key={c.label} className={`pr-4 font-normal ${c.width}`}>{c.label}</th>)}
            </tr>
          </thead>
          <tbody>
            {samples.map((s, row) => (
              <tr key={s.name} className={`h-[86px] border-b-2 border-[#1b1d24] ${row === 1 ? 'bg-[#101318] text-[#eef0f6]' : 'text-[#a9aebb]'}`}>
                <th className="pl-6 text-left leading-7 font-normal">
                  {s.name}
                  <div className="text-xl text-[#6b7280]">{s.range}</div>
                </th>
                {s.cells.map((value, i) => (
                  <td key={columns[i].label} className={`pr-4 ${MONO} ${i === 1 ? 'text-[#f87171]' : 'text-[#eef0f6]'}`}>{value}</td>
                ))}
              </tr>
            ))}
          </tbody>
        </table>
      </section>
    </div>
  );
}

export default function App() {
  return (
    <div className={`flex h-screen overflow-hidden bg-[#050709] text-[#eef0f6] ${SANS}`}>
      <Sidebar />
      <main className="flex min-w-0 flex-1 flex-col">
        <StatusBar />
        <CreatorBar />
        <MarketBar />
        <div className="grid min-h-0 flex-1 grid-cols-[5fr_7fr]">
          <RulesColumn />
          <PreviewColumn />
        </div>
      </main>
    </div>
  );
}
